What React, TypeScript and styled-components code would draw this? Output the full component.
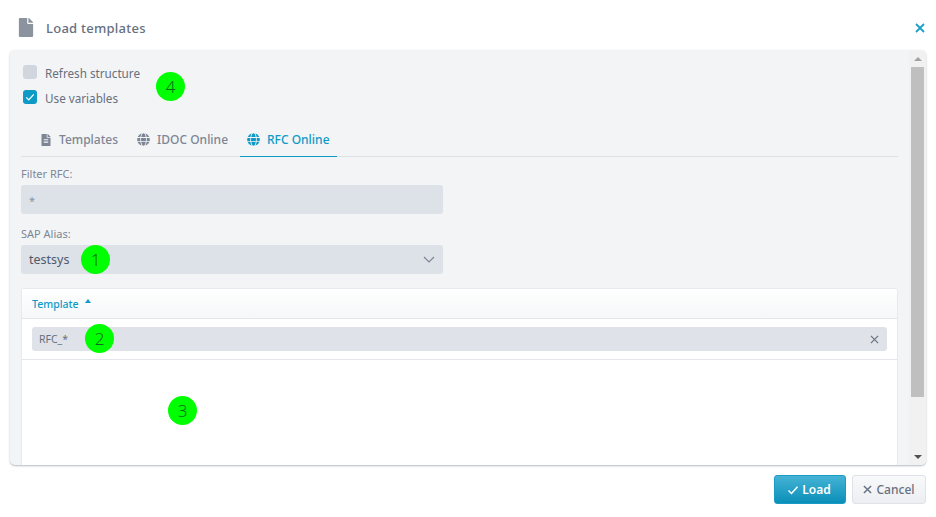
import React from 'react';
import styled, { createGlobalStyle } from 'styled-components';
import { FaFile, FaFileAlt, FaGlobe } from 'react-icons/fa';

const GlobalStyle = createGlobalStyle`
  html, body {
    margin: 0;
    padding: 0;
    background: #fff;
    font-family: "Noto Sans", "Open Sans", sans-serif;
    color: #5f6a7a;
  }
  * { box-sizing: border-box; }
`;

const Dialog = styled.div`
  width: 936px;
  height: 517px;
  overflow: hidden;
  display: flex;
  flex-direction: column;
`;

const Header = styled.div`
  height: 50px;
  padding: 5px 11px 0 18px;
  display: flex;
  align-items: center;
  flex-shrink: 0;
`;

const Title = styled.div`
  margin-left: 12px;
  flex: 1;
  font-size: 13px;
  font-weight: 500;
  letter-spacing: 0.25px;
  color: #667080;
`;

const Panel = styled.div`
  position: relative;
  height: 415px;
  margin: 0 10px;
  background: #f3f4f6;
  border-radius: 5px;
  box-shadow: 0 1px 2px rgba(120, 130, 150, 0.55);
  display: flex;
  overflow: hidden;
  flex-shrink: 0;
`;

const Content = styled.div`
  flex: 1;
  min-width: 0;
  padding: 10px 11px 0 11px;
  display: flex;
  flex-direction: column;
`;

const CheckRow = styled.div`
  display: flex;
  align-items: center;
  height: 25px;
  padding-left: 2px;
  font-size: 11.7px;
  color: #667080;
`;

const CheckBox = styled.span<{ $checked?: boolean }>`
  width: 14px;
  height: 14px;
  margin: 0 8px 2px 0;
  border-radius: 3px;
  background: ${p => (p.$checked ? '#0e9ac6' : '#d1d6de')};
  display: flex;
  align-items: center;
  justify-content: center;
`;

const Tabs = styled.div`
  margin-top: 14px;
  height: 33px;
  padding-left: 12px;
  display: flex;
  gap: 6px;
  border-bottom: 1px solid #dde1e7;
  flex-shrink: 0;
`;

const Tab = styled.div<{ $active?: boolean }>`
  height: 33px;
  padding: 0 ${p => (p.$active ? '7px' : '6px')} 2px 7px;
  display: flex;
  align-items: center;
  gap: 7px;
  font-size: 12px;
  font-weight: 500;
  color: ${p => (p.$active ? '#0e9ac6' : '#7d8694')};
  border-bottom: ${p => (p.$active ? '1px solid #0e9ac6' : 'none')};
`;

const Label = styled.div`
  margin-top: 9px;
  height: 19px;
  font-size: 11px;
  line-height: 16px;
  color: #7d8694;
`;

const Field = styled.div`
  width: 422px;
  height: 29px;
  padding: 0 8px;
  display: flex;
  align-items: center;
  justify-content: space-between;
  border-radius: 3px;
  background: #dde1e8;
  font-size: 12.5px;
  color: #4f5a6a;
  flex-shrink: 0;
`;

const FilterValue = styled.span`
  padding-top: 1px;
  font-size: 11px;
  color: #8a929e;
`;

const Spacer = styled.div`
  height: 3px;
`;

const Table = styled.div`
  margin-top: 14px;
  flex: 1;
  background: #fff;
  border: 1px solid #e6e9ee;
  border-bottom: none;
  border-radius: 3px 3px 0 0;
`;

const TableHead = styled.div`
  height: 30px;
  padding: 0 10px;
  display: flex;
  align-items: center;
  gap: 6px;
  font-size: 10.5px;
  font-weight: 500;
  color: #0e9ac6;
  background: linear-gradient(#ffffff, #f6f7f9);
  border-bottom: 1px solid #e3e6eb;
`;

const SortCaret = styled.span`
  width: 0;
  height: 0;
  margin-top: -6px;
  border-left: 3.5px solid transparent;
  border-right: 3.5px solid transparent;
  border-bottom: 4px solid #0e9ac6;
`;

const FilterRow = styled.div`
  height: 41px;
  padding: 8px 10px;
  border-bottom: 1px solid #e3e6eb;
`;

const FilterInput = styled.div`
  height: 24px;
  padding: 0 8px 0 7px;
  display: flex;
  align-items: center;
  justify-content: space-between;
  border-radius: 3px;
  background: #dfe2e8;
  font-size: 10.5px;
  color: #667080;
`;

const Scrollbar = styled.div`
  width: 17px;
  flex-shrink: 0;
  background: #f1f1f1;
  display: flex;
  flex-direction: column;
  align-items: center;
`;

const ScrollArrow = styled.span<{ $down?: boolean }>`
  height: 17px;
  display: flex;
  align-items: center;
  flex-shrink: 0;
  &::before {
    content: '';
    border-left: 4px solid transparent;
    border-right: 4px solid transparent;
    ${p =>
      p.$down
        ? 'border-top: 4px solid #505050;'
        : 'border-bottom: 4px solid #a3a3a3;'}
  }
`;

const ScrollThumb = styled.div`
  width: 13px;
  height: 330px;
  background: #bfbfbf;
`;

const ScrollTrack = styled.div`
  flex: 1;
`;

const Footer = styled.div`
  padding: 10px 10px 0 0;
  display: flex;
  justify-content: flex-end;
  gap: 6px;
`;

const Button = styled.div<{ $primary?: boolean }>`
  height: 29px;
  display: flex;
  align-items: center;
  justify-content: center;
  gap: ${p => (p.$primary ? '3px' : '4px')};
  border-radius: 3px;
  font-size: 12px;
  font-weight: ${p => (p.$primary ? 600 : 500)};
  width: ${p => (p.$primary ? '72px' : '74px')};
  padding-right: ${p => (p.$primary ? '2px' : '0')};
  color: ${p => (p.$primary ? '#fff' : '#667080')};
  background: ${p =>
    p.$primary
      ? 'linear-gradient(#45b3d5, #0a8fb9)'
      : 'linear-gradient(#f8f9fa, #eceef2)'};
  border: 1px solid ${p => (p.$primary ? '#1a9bc3' : '#dfe2e8')};
`;

const Badge = styled.span<{ $left: number; $top: number }>`
  position: absolute;
  left: ${p => p.$left}px;
  top: ${p => p.$top}px;
  width: 29px;
  height: 29px;
  border-radius: 50%;
  background: #00ff00;
  color: #0c6a1c;
  font-size: 17px;
  font-family: "Noto Sans", sans-serif;
  font-weight: 300;
  display: flex;
  align-items: center;
  justify-content: center;
`;

const Cross = ({ color, size, width = 1.6 }: { color: string; size: number; width?: number }) => (
  <svg width={size} height={size} viewBox="0 0 10 10">
    <path d="M1 1 L9 9 M9 1 L1 9" stroke={color} strokeWidth={width} fill="none" />
  </svg>
);

const Check = ({ color, size, width = 1.5 }: { color: string; size: number; width?: number }) => (
  <svg width={size} height={size} viewBox="0 0 12 12">
    <path d="M1.5 6.5 L4.5 9.5 L10.5 2.8" stroke={color} strokeWidth={width} fill="none" />
  </svg>
);

const App: React.FC = () => (
  <Dialog>
    <GlobalStyle />
    <Header>
      <FaFile size={19} color="#8b939f" style={{ width: 16 }} />
      <Title>Load templates</Title>
      <Cross color="#1a9fc9" size={10} width={1.8} />
    </Header>

    <Panel>
      <Content>
        <CheckRow>
          <CheckBox />
          Refresh structure
        </CheckRow>
        <CheckRow>
          <CheckBox $checked>
            <Check color="#fff" size={10} />
          </CheckBox>
          Use variables
        </CheckRow>

        <Tabs>
          <Tab>
            <FaFileAlt size={12} color="#7d8694" />
            Templates
          </Tab>
          <Tab>
            <FaGlobe size={13} color="#7d8694" />
            IDOC Online
          </Tab>
          <Tab $active>
            <FaGlobe size={13} color="#0e9ac6" />
            RFC Online
          </Tab>
        </Tabs>

        <Label>Filter RFC:</Label>
        <Field>
          <FilterValue>*</FilterValue>
        </Field>
        <Spacer />
        <Label>SAP Alias:</Label>
        <Field>
          testsys
          <svg width="12" height="7" viewBox="0 0 12 7">
            <path d="M1 1 L6 6 L11 1" stroke="#7d8694" strokeWidth="1.2" fill="none" />
          </svg>
        </Field>

        <Table>
          <TableHead>
            Template
            <SortCaret />
          </TableHead>
          <FilterRow>
            <FilterInput>
              RFC_*
              <Cross color="#6d7684" size={9} width={1.4} />
            </FilterInput>
          </FilterRow>
        </Table>
      </Content>

      <Scrollbar>
        <ScrollArrow />
        <ScrollThumb />
        <ScrollTrack />
        <ScrollArrow $down />
      </Scrollbar>

      <Badge $left={146} $top={22}>4</Badge>
      <Badge $left={71} $top={195}>1</Badge>
      <Badge $left={75} $top={274}>2</Badge>
      <Badge $left={158} $top={346}>3</Badge>
    </Panel>

    <Footer>
      <Button $primary>
        <Check color="#fff" size={12} />
        Load
      </Button>
      <Button>
        <Cross color="#667080" size={9} />
        Cancel
      </Button>
    </Footer>
  </Dialog>
);

export default App;
